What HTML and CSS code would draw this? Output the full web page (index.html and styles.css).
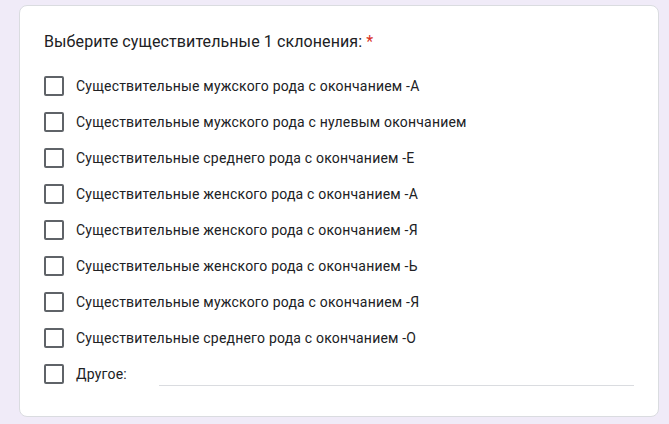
FILE: index.html
```html
<!DOCTYPE html>
<html lang="ru">
<head>
<meta charset="utf-8">
<link rel="stylesheet" href="styles.css">
</head>
<body>
<div class="card">
  <div class="title">Выберите существительные 1 склонения: <span class="req">*</span></div>
  <div class="options">
    <div class="opt"><span class="box"></span><span class="lbl">Существительные мужского рода с окончанием -А</span></div>
    <div class="opt"><span class="box"></span><span class="lbl">Существительные мужского рода с нулевым окончанием</span></div>
    <div class="opt"><span class="box"></span><span class="lbl">Существительные среднего рода с окончанием -Е</span></div>
    <div class="opt"><span class="box"></span><span class="lbl">Существительные женского рода с окончанием -А</span></div>
    <div class="opt"><span class="box"></span><span class="lbl">Существительные женского рода с окончанием -Я</span></div>
    <div class="opt"><span class="box"></span><span class="lbl">Существительные женского рода с окончанием -Ь</span></div>
    <div class="opt"><span class="box"></span><span class="lbl">Существительные мужского рода с окончанием -Я</span></div>
    <div class="opt"><span class="box"></span><span class="lbl">Существительные среднего рода с окончанием -О</span></div>
    <div class="opt"><span class="box"></span><span class="lbl">Другое:</span><span class="other"></span></div>
  </div>
</div>
</body>
</html>
```
FILE: styles.css
```css
html, body {
  margin: 0;
  padding: 0;
}
body {
  background: #f0ebf8;
  font-family: Roboto, "Noto Sans", sans-serif;
  color: #202124;
  width: 669px;
  height: 424px;
  overflow: hidden;
  padding: 5px 0 0 19px;
  box-sizing: border-box;
}
.card {
  width: 640px;
  box-sizing: border-box;
  background: #fff;
  border: 1px solid #dadce0;
  border-radius: 8px;
  padding: 24px 24px 24px 24px;
}
.title {
  font-size: 16px;
  line-height: 24px;
  letter-spacing: 0.1px;
}
.req {
  color: #d93025;
}
.options {
  margin-top: 14px;
  display: flex;
  flex-direction: column;
}
.opt {
  height: 36px;
  display: flex;
  align-items: center;
}
.box {
  width: 20px;
  height: 20px;
  box-sizing: border-box;
  border: 2px solid #5f6368;
  border-radius: 2px;
  flex: none;
}
.lbl {
  margin-left: 12px;
  font-size: 14px;
  letter-spacing: 0.2px;
}
.other {
  flex: 1;
  margin-left: 32px;
  align-self: flex-end;
  margin-bottom: 6px;
  border-bottom: 1px solid #dadce0;
  height: 1px;
}
```
